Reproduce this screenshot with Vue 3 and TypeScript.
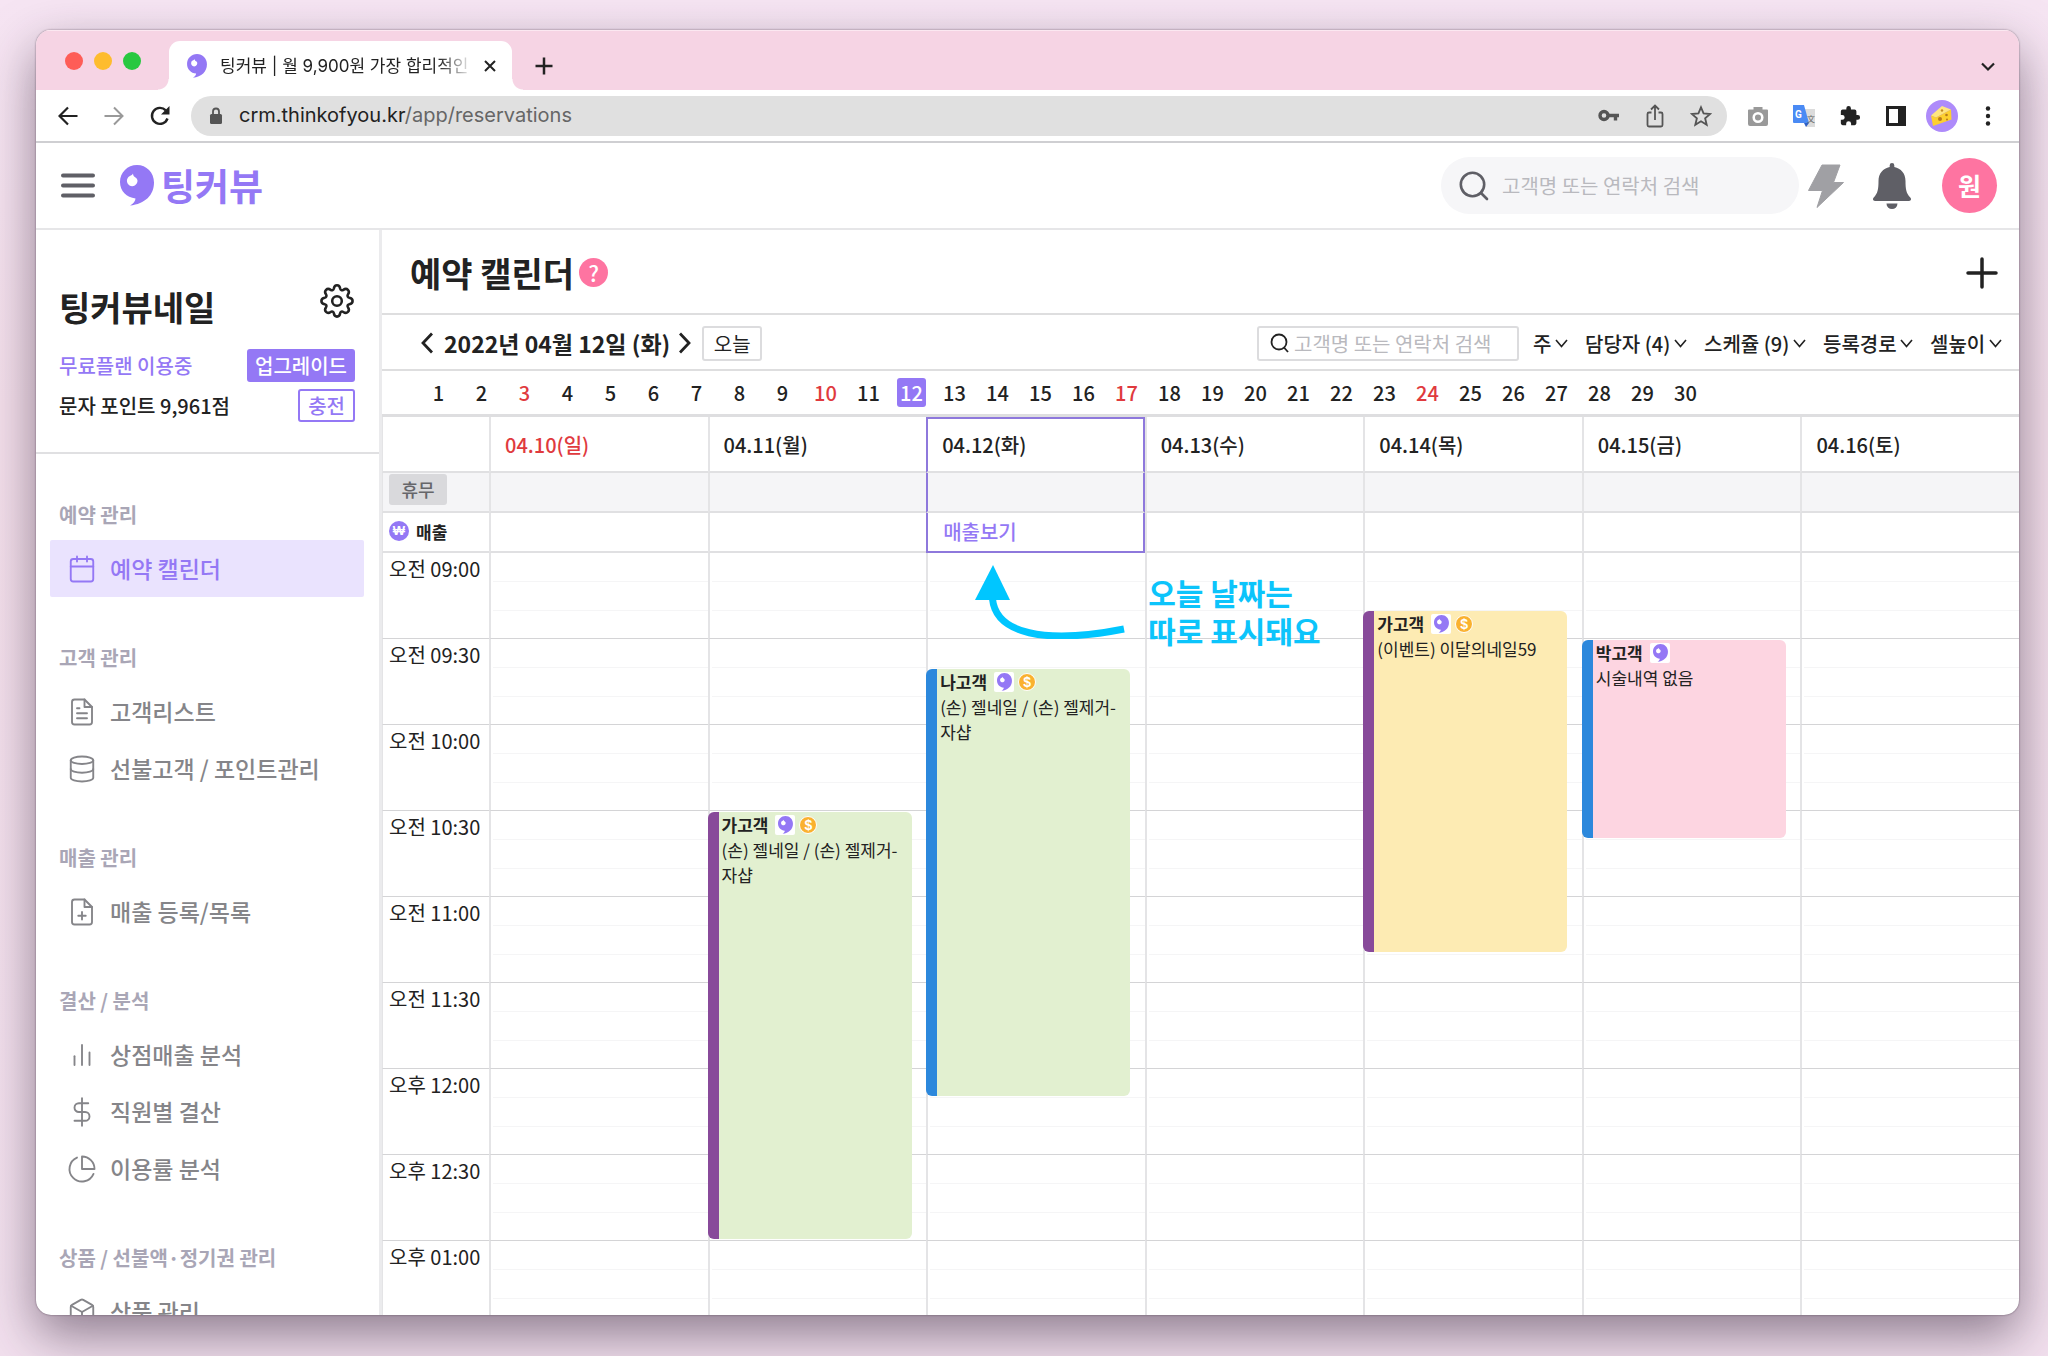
<script setup lang="ts">
interface NavItem {
  label: string
  icon: string[]
  active?: boolean
}

interface NavSection {
  title: string
  items: NavItem[]
}

interface Booking {
  day: number
  slot: number
  slots: number
  name: string
  detail: string
  paid: boolean
  color: 'green' | 'yellow' | 'pink'
  staff: 'purple' | 'blue'
}

const sections: NavSection[] = [
  {
    title: '예약 관리',
    items: [
      {
        label: '예약 캘린더',
        active: true,
        icon: ['M5 4h14a2 2 0 0 1 2 2v14a2 2 0 0 1-2 2H5a2 2 0 0 1-2-2V6a2 2 0 0 1 2-2z', 'M16 2v4', 'M8 2v4', 'M3 10h18'],
      },
    ],
  },
  {
    title: '고객 관리',
    items: [
      {
        label: '고객리스트',
        icon: ['M14 2H6a2 2 0 0 0-2 2v16a2 2 0 0 0 2 2h12a2 2 0 0 0 2-2V8z', 'M14 2v6h6', 'M16 13H8', 'M16 17H8', 'M10 9H8'],
      },
      {
        label: '선불고객 / 포인트관리',
        icon: ['M3 5a9 3 0 1 0 18 0a9 3 0 1 0-18 0', 'M21 12c0 1.66-4 3-9 3s-9-1.34-9-3', 'M3 5v14c0 1.66 4 3 9 3s9-1.34 9-3V5'],
      },
    ],
  },
  {
    title: '매출 관리',
    items: [
      {
        label: '매출 등록/목록',
        icon: ['M14 2H6a2 2 0 0 0-2 2v16a2 2 0 0 0 2 2h12a2 2 0 0 0 2-2V8z', 'M14 2v6h6', 'M12 18v-6', 'M9 15h6'],
      },
    ],
  },
  {
    title: '결산 / 분석',
    items: [
      { label: '상점매출 분석', icon: ['M18 20V10', 'M12 20V4', 'M6 20v-7'] },
      { label: '직원별 결산', icon: ['M12 1v22', 'M17 5H9.5a3.5 3.5 0 0 0 0 7h5a3.5 3.5 0 0 1 0 7H6'] },
      { label: '이용률 분석', icon: ['M21.21 15.89A10 10 0 1 1 8 2.83', 'M22 12A10 10 0 0 0 12 2v10z'] },
    ],
  },
  {
    title: '상품 / 선불액·정기권 관리',
    items: [
      {
        label: '상품 관리',
        icon: [
          'M21 16V8a2 2 0 0 0-1-1.73l-7-4a2 2 0 0 0-2 0l-7 4A2 2 0 0 0 3 8v8a2 2 0 0 0 1 1.73l7 4a2 2 0 0 0 2 0l7-4A2 2 0 0 0 21 16z',
          'M3.27 6.96L12 12.01l8.73-5.05',
          'M12 22.08V12',
        ],
      },
    ],
  },
]

const filters: string[] = ['주', '담당자 (4)', '스케쥴 (9)', '등록경로', '셀높이']
const monthDays: number[] = Array.from({ length: 30 }, (_, i) => i + 1)
const sundays: number[] = [3, 10, 17, 24]
const today = 12

const week: { day: number; label: string }[] = [
  { day: 10, label: '04.10(일)' },
  { day: 11, label: '04.11(월)' },
  { day: 12, label: '04.12(화)' },
  { day: 13, label: '04.13(수)' },
  { day: 14, label: '04.14(목)' },
  { day: 15, label: '04.15(금)' },
  { day: 16, label: '04.16(토)' },
]

const times: string[] = [
  '오전 09:00',
  '오전 09:30',
  '오전 10:00',
  '오전 10:30',
  '오전 11:00',
  '오전 11:30',
  '오후 12:00',
  '오후 12:30',
  '오후 01:00',
]

// slot = ten-minute steps counted from 09:00
const bookings: Booking[] = [
  { day: 11, slot: 9, slots: 15, name: '가고객', detail: '(손) 젤네일 / (손) 젤제거-자샵', paid: true, color: 'green', staff: 'purple' },
  { day: 12, slot: 4, slots: 15, name: '나고객', detail: '(손) 젤네일 / (손) 젤제거-자샵', paid: true, color: 'green', staff: 'blue' },
  { day: 14, slot: 2, slots: 12, name: '가고객', detail: '(이벤트) 이달의네일59', paid: true, color: 'yellow', staff: 'purple' },
  { day: 15, slot: 3, slots: 7, name: '박고객', detail: '시술내역 없음', paid: false, color: 'pink', staff: 'blue' },
]

const ROW_HEIGHT = 86
const SLOTS_PER_ROW = 3

function bookingsAt(day: number, row: number): Booking[] {
  return bookings.filter((b) => b.day === day && Math.floor(b.slot / SLOTS_PER_ROW) === row)
}

function bookingStyle(b: Booking): Record<string, string> {
  const slotHeight = ROW_HEIGHT / SLOTS_PER_ROW
  return {
    top: `${Math.round((b.slot % SLOTS_PER_ROW) * slotHeight) + 1}px`,
    height: `${Math.round(b.slots * slotHeight) - 3}px`,
  }
}

const bubble =
  'M17 0C26.500 0 34 7.500 34 17.500C34 30 25 39 10 40.500C13.500 38.500 15.500 36 15.500 33.500C6.500 32.500 0 26 0 17C0 7.500 7.500 0 17 0Z'
const bubbleSpot = 'M13 8.500c0 2 1 3 2.500 4c1.500 1 2 2.200 2 3.500a5.300 5.300 0 1 1-8-4.700c2-1 3-1.600 3.500-2.800z'
</script>

<template>
  <div class="desktop">
    <div class="window">
      <div class="tab-strip">
        <div class="lights"><i class="red"></i><i class="amber"></i><i class="green"></i></div>
        <div class="tab">
          <svg class="favicon" viewBox="0 0 34 41"><path :d="bubble" fill="#9478f5" /><path :d="bubbleSpot" fill="#fff" /></svg>
          <span class="tab-title">팅커뷰 | 월 9,900원 가장 합리적인</span>
          <button class="plain" aria-label="탭 닫기">
            <svg width="12" height="12" viewBox="0 0 12 12" fill="none" stroke="#222" stroke-width="2"><path d="M1 1l10 10M11 1L1 11" /></svg>
          </button>
        </div>
        <button class="plain new-tab" aria-label="새 탭">
          <svg width="18" height="18" viewBox="0 0 18 18" fill="none" stroke="#222" stroke-width="2.500"><path d="M9 0.500v17M0.500 9h17" /></svg>
        </button>
        <button class="plain tab-list" aria-label="탭 목록">
          <svg width="14" height="10" viewBox="0 0 14 10" fill="none" stroke="#222" stroke-width="2.200"><path d="M1 1.500l6 6 6-6" /></svg>
        </button>
      </div>

      <div class="browser-bar">
        <button class="plain nav-button" aria-label="뒤로">
          <svg width="20" height="20" viewBox="0 0 20 20" fill="none" stroke="#222" stroke-width="2.200"><path d="M19.500 10H2M10 1.500L1.500 10l8.500 8.500" /></svg>
        </button>
        <button class="plain nav-button" aria-label="앞으로">
          <svg width="20" height="20" viewBox="0 0 20 20" fill="none" stroke="#999" stroke-width="2"><path d="M0.500 10H18M10 1.500l8.500 8.500-8.500 8.500" /></svg>
        </button>
        <button class="plain nav-button" aria-label="새로고침">
          <svg width="22" height="22" viewBox="0 0 22 22"><path d="M18.500 13.500A8 8 0 1 1 16.800 5.400" fill="none" stroke="#222" stroke-width="2.400" /><path d="M20.500 1v8.500H12z" fill="#222" /></svg>
        </button>
        <div class="address">
          <svg width="14" height="18" viewBox="0 0 14 18"><rect x="1" y="7" width="12" height="10" rx="1.500" fill="#555" /><path d="M4 7V4.500a3 3 0 0 1 6 0V7" fill="none" stroke="#555" stroke-width="1.800" /></svg>
          <span class="url">crm.thinkofyou.kr<span class="url-path">/app/reservations</span></span>
          <svg width="22" height="22" viewBox="0 0 22 22" fill="none" stroke="#555"><circle cx="6" cy="10.500" r="4" stroke-width="3.400" /><path d="M10 10.500h11M17.500 10.500v5" stroke-width="3.400" /></svg>
          <svg width="22" height="26" viewBox="0 0 22 26" fill="none" stroke="#555" stroke-width="1.800"><path d="M7.500 9.500H5a1.500 1.500 0 0 0-1.500 1.500v11A1.500 1.500 0 0 0 5 23.500h12a1.500 1.500 0 0 0 1.500-1.500V11A1.500 1.500 0 0 0 17 9.500h-2.500M11 17V3M7 6.500l4-4 4 4" /></svg>
          <svg width="22" height="22" viewBox="0 0 24 24" fill="none" stroke="#555" stroke-width="2"><path d="M12 2.500l2.800 6.700 7.200.6-5.500 4.700 1.700 7-6.200-3.800-6.200 3.800 1.700-7L2 9.800l7.200-.6z" /></svg>
        </div>
        <div class="extensions">
          <svg width="22" height="22" viewBox="0 0 22 22"><path d="M2 4.500h4.500V2h9v2.500H20A1 1 0 0 1 21 5.500V19a2 2 0 0 1-2 2H3a2 2 0 0 1-2-2V5.500a1 1 0 0 1 1-1z" fill="#999" /><circle cx="11" cy="12.500" r="4.300" fill="#999" stroke="#fff" stroke-width="2.500" /></svg>
          <svg width="24" height="24" viewBox="0 0 24 24"><path d="M11 5h12v18H14z" fill="#dcdcdc" /><path d="M1 1h11l5 18H2a1 1 0 0 1-1-1z" fill="#4a8af4" /><path d="M12 19h5l-3 4z" fill="#2f5fc4" /><text x="3" y="14" font-size="10" font-weight="700" fill="#fff" font-family="Roboto, sans-serif">G</text><text x="15" y="18" font-size="8" fill="#666" font-family="'Noto Sans CJK KR', sans-serif">文</text></svg>
          <svg width="22" height="22" viewBox="0 0 24 24"><path d="M20.500 11H19V7a2 2 0 0 0-2-2h-4V3.500a2.500 2.500 0 0 0-5 0V5H4a2 2 0 0 0-2 2v3.800h1.500a2.700 2.700 0 0 1 0 5.400H2V20a2 2 0 0 0 2 2h3.800v-1.500a2.700 2.700 0 0 1 5.400 0V22H17a2 2 0 0 0 2-2v-4h1.500a2.500 2.500 0 0 0 0-5z" fill="#222" /></svg>
          <svg width="22" height="22" viewBox="0 0 22 22"><path d="M1 1h20v20H1z" fill="#222" /><path d="M4 4h9v14H4z" fill="#fff" /></svg>
          <svg width="32" height="32" viewBox="0 0 32 32"><circle cx="16" cy="16" r="16" fill="#ae8bfa" /><path d="M5 15.500L16 6l9 3.500-15 8z" fill="#ffe680" /><path d="M5 15.500l5 2 15-8 .5 10L7 26z" fill="#fdd02f" /><circle cx="14" cy="19" r="2" fill="#b87a1c" /><circle cx="20.500" cy="15" r="1.300" fill="#b87a1c" /><circle cx="21" cy="19.500" r="1" fill="#b87a1c" /><circle cx="16" cy="10.500" r="1.200" fill="#c48a25" /></svg>
          <svg width="22" height="22" viewBox="0 0 22 22" fill="#222"><circle cx="11" cy="3.500" r="2.200" /><circle cx="11" cy="11" r="2.200" /><circle cx="11" cy="18.500" r="2.200" /></svg>
        </div>
      </div>

      <header class="app-header">
        <button class="plain" aria-label="메뉴">
          <svg width="34" height="25" viewBox="0 0 34 25" fill="none" stroke="#5f5f66" stroke-width="4" stroke-linecap="round"><path d="M2 2.500h30M2 12.500h30M2 22.500h30" /></svg>
        </button>
        <a class="brand" href="#">
          <svg width="34" height="41" viewBox="0 0 34 41"><path :d="bubble" fill="#9478f5" /><path :d="bubbleSpot" fill="#fff" /></svg>
          <span>팅커뷰</span>
        </a>
        <label class="global-search">
          <svg width="30" height="30" viewBox="0 0 30 30" fill="none" stroke="#5f5f66" stroke-width="2.600" stroke-linecap="round"><circle cx="13.500" cy="13.500" r="11.700" /><path d="M22 22l6 6" /></svg>
          <input type="text" placeholder="고객명 또는 연락처 검색" aria-label="고객명 또는 연락처 검색" />
        </label>
        <button class="plain bolt" aria-label="빠른 실행">
          <svg width="36" height="44" viewBox="0 0 36 44"><path d="M14 1h18L25.500 18.500H35.500L9 43.500 14.500 26.500H0.500z" fill="#a0a0a4" stroke="#a0a0a4" stroke-linejoin="round" /></svg>
        </button>
        <button class="plain bell" aria-label="알림">
          <svg width="38" height="46" viewBox="0 0 38 46" fill="#5f5f66"><path d="M19 0a2.300 2.300 0 0 1 2.300 2.300V4C28 5.200 32.500 10.500 32.500 18c0 8 .8 12.500 4.800 16.500 1.400 1.500.7 3.500-1.300 3.500H2c-2 0-2.700-2-1.300-3.500C4.700 30.500 5.500 26 5.500 18 5.500 10.500 10 5.200 16.700 4V2.300A2.300 2.300 0 0 1 19 0z" /><path d="M13.500 40.500h11a5.500 5.500 0 0 1-11 0z" /></svg>
        </button>
        <button class="profile">원</button>
      </header>

      <div class="body">
        <aside class="sidebar">
          <section class="shop">
            <div class="shop-head">
              <h2>팅커뷰네일</h2>
              <button class="plain" aria-label="설정">
                <svg width="36" height="36" viewBox="0 0 24 24" fill="none" stroke="#222" stroke-width="1.700" stroke-linejoin="round"><circle cx="12" cy="12" r="3.200" /><path d="M12 1.500c1.400 0 1.900.9 2.100 2.200.2 1.100 1.200 1.500 2.100.9 1.100-.8 2.100-1 3.100 0s.8 2 0 3.100c-.6.900-.2 1.900.9 2.100 1.300.2 2.200.7 2.200 2.200s-.9 1.900-2.200 2.100c-1.100.2-1.500 1.200-.9 2.100.8 1.100 1 2.100 0 3.100s-2 .8-3.100 0c-.9-.6-1.900-.2-2.100.9-.2 1.300-.7 2.200-2.100 2.200s-1.900-.9-2.100-2.200c-.2-1.100-1.200-1.500-2.100-.9-1.100.8-2.100 1-3.100 0s-.8-2 0-3.100c.6-.9.2-1.900-.9-2.100-1.300-.2-2.200-.7-2.200-2.100s.9-2 2.200-2.200c1.100-.2 1.500-1.200.9-2.100-.8-1.100-1-2.100 0-3.100s2-.8 3.100 0c.9.600 1.900.2 2.100-.9.200-1.300.7-2.200 2.100-2.200z" /></svg>
              </button>
            </div>
            <div class="shop-row">
              <span class="plan">무료플랜 이용중</span>
              <button class="tag solid">업그레이드</button>
            </div>
            <div class="shop-row">
              <span>문자 포인트 9,961점</span>
              <button class="tag outline">충전</button>
            </div>
          </section>
          <nav>
            <section v-for="section in sections" :key="section.title" class="nav-section">
              <h3>{{ section.title }}</h3>
              <a v-for="item in section.items" :key="item.label" href="#" :class="['nav-item', { active: item.active }]">
                <svg width="30" height="30" viewBox="0 0 24 24" fill="none" stroke="currentColor" stroke-width="1.500" stroke-linecap="round" stroke-linejoin="round">
                  <path v-for="d in item.icon" :key="d" :d="d" />
                </svg>
                <span>{{ item.label }}</span>
              </a>
            </section>
          </nav>
        </aside>

        <main class="main">
          <div class="page-head">
            <h1>예약 캘린더</h1>
            <button class="help" aria-label="도움말">?</button>
            <button class="plain add" aria-label="예약 추가">
              <svg width="32" height="32" viewBox="0 0 32 32" fill="none" stroke="#222" stroke-width="3.500" stroke-linecap="round"><path d="M16 2v28M2 16h28" /></svg>
            </button>
          </div>

          <div class="toolbar">
            <button class="plain" aria-label="이전">
              <svg width="12" height="22" viewBox="0 0 12 22" fill="none" stroke="#222" stroke-width="2.800"><path d="M11 1.500L2 11l9 9.500" /></svg>
            </button>
            <strong class="date">2022년 04월 12일 (화)</strong>
            <button class="plain" aria-label="다음">
              <svg width="12" height="22" viewBox="0 0 12 22" fill="none" stroke="#222" stroke-width="2.800"><path d="M1 1.500L10 11l-9 9.500" /></svg>
            </button>
            <button class="today-button">오늘</button>
            <label class="search">
              <svg width="20" height="20" viewBox="0 0 20 20" fill="none" stroke="#222" stroke-width="1.800"><circle cx="9" cy="9" r="7.500" /><path d="M14 14.500l4 4.500" /></svg>
              <input type="text" placeholder="고객명 또는 연락처 검색" aria-label="예약 고객 검색" />
            </label>
            <label v-for="filter in filters" :key="filter" class="filter">
              <select :aria-label="filter"><option>{{ filter }}</option></select>
              <svg width="13" height="9" viewBox="0 0 13 9" fill="none" stroke="#222" stroke-width="1.600"><path d="M1 1l5.500 6.500L12 1" /></svg>
            </label>
          </div>

          <div class="month">
            <button v-for="d in monthDays" :key="d" class="month-day">
              <span :class="{ sunday: sundays.includes(d), current: d === today }">{{ d }}</span>
            </button>
          </div>

          <table class="calendar">
            <thead>
              <tr class="dates">
                <th class="axis"></th>
                <th v-for="d in week" :key="d.day" scope="col" :class="{ sunday: d.day === 10, today: d.day === today }">{{ d.label }}</th>
              </tr>
              <tr class="closed">
                <th class="axis" scope="row"><span class="chip">휴무</span></th>
                <td v-for="d in week" :key="d.day" :class="{ today: d.day === today }"></td>
              </tr>
              <tr class="sales">
                <th class="axis" scope="row"><span class="sales-label"><i>₩</i>매출</span></th>
                <td v-for="d in week" :key="d.day" :class="{ today: d.day === today }">
                  <a v-if="d.day === today" href="#">매출보기</a>
                </td>
              </tr>
            </thead>
            <tbody>
              <tr v-for="(time, row) in times" :key="time">
                <th class="axis" scope="row">{{ time }}</th>
                <td v-for="d in week" :key="d.day">
                  <article v-for="b in bookingsAt(d.day, row)" :key="b.slot" :class="['booking', b.color, b.staff]" :style="bookingStyle(b)">
                    <div class="booking-head">
                      <strong>{{ b.name }}</strong>
                      <svg class="member" width="20" height="20" viewBox="0 0 20 20"><rect width="20" height="20" rx="2" fill="#fff" /><g transform="translate(3 1) scale(.44)"><path :d="bubble" fill="#9478f5" /><path :d="bubbleSpot" fill="#fff" /></g></svg>
                      <i v-if="b.paid" class="coin">$</i>
                    </div>
                    <p>{{ b.detail }}</p>
                  </article>
                  <div v-if="d.day === today && row === 0" class="callout">
                    <svg width="150" height="74" viewBox="0 0 150 74"><path d="M17.500 34C21 68 68 80 149 64" fill="none" stroke="#00c6ff" stroke-width="7" /><path d="M18 0l17 35H0z" fill="#00c6ff" /></svg>
                    <p>오늘 날짜는<br />따로 표시돼요</p>
                  </div>
                </td>
              </tr>
            </tbody>
          </table>
        </main>
      </div>
    </div>
  </div>
</template>

<style>
body {
  margin: 0;
}
</style>

<style scoped>
* {
  box-sizing: border-box;
}

.desktop {
  display: flex;
  height: 100vh;
  padding: 30px 29px 41px 36px;
  overflow: hidden;
  background: linear-gradient(180deg, #f6e5f3 0%, #f4dfeb 30%, #f2e0ee 100%);
  color: #222;
  font-family: 'Noto Sans CJK KR', 'Noto Sans', sans-serif;
  font-size: 20px;
  line-height: 29px;
}

.window {
  display: flex;
  flex: 1;
  flex-direction: column;
  min-width: 0;
  overflow: hidden;
  border-radius: 15px;
  background: #fff;
  box-shadow: 0 0 2px rgba(40, 20, 40, 0.6), 0 20px 50px rgba(50, 35, 55, 0.52);
}

button,
input,
select {
  margin: 0;
  padding: 0;
  border: 0;
  background: none;
  color: inherit;
  font: inherit;
}

svg {
  display: block;
  flex: none;
}

a {
  color: inherit;
  text-decoration: none;
}

h1,
h2,
h3,
p {
  margin: 0;
}

i {
  font-style: normal;
}

.plain {
  display: flex;
  align-items: center;
  justify-content: center;
}

/* browser chrome */
.tab-strip {
  display: flex;
  flex: none;
  align-items: flex-end;
  height: 60px;
  padding: 0 24px 0 29px;
  background: #f6d4e4;
  box-shadow: inset 0 1px #fbe8f1;
}

.lights {
  display: flex;
  gap: 11px;
  width: 104px;
  padding-bottom: 20px;
}

.lights i {
  width: 18px;
  height: 18px;
  border-radius: 50%;
}

.red {
  background: #fe5d57;
}

.amber {
  background: #febc2e;
}

.lights .green {
  background: #28c840;
}

.tab {
  position: relative;
  display: flex;
  align-items: center;
  width: 343px;
  height: 49px;
  padding: 0 16px 0 18px;
  border-radius: 11px 11px 0 0;
  background: #fff;
}

.tab::before,
.tab::after {
  content: '';
  position: absolute;
  bottom: 0;
  width: 11px;
  height: 11px;
}

.tab::before {
  right: 100%;
  background: radial-gradient(circle at 0 0, transparent 10px, #fff 11px);
}

.tab::after {
  left: 100%;
  background: radial-gradient(circle at 100% 0, transparent 10px, #fff 11px);
}

.favicon {
  width: 20px;
  height: 24px;
}

.tab-title {
  flex: 1;
  margin: 0 16px 0 13px;
  overflow: hidden;
  font-family: Inter, 'Noto Sans CJK KR', sans-serif;
  font-size: 17px;
  line-height: 28px;
  white-space: nowrap;
  mask-image: linear-gradient(90deg, #000 88%, transparent 102%);
}

.new-tab {
  margin: 0 auto 15px 23px;
}

.tab-list {
  margin-bottom: 18px;
}

.browser-bar {
  display: flex;
  flex: none;
  align-items: center;
  height: 53px;
  padding-left: 20px;
  border-bottom: 2px solid #cfcfd2;
}

.nav-button {
  width: 24px;
  height: 24px;
  margin-right: 22px;
}

.address {
  display: flex;
  flex: 1;
  align-items: center;
  gap: 24px;
  height: 40px;
  margin-left: -3px;
  padding: 0 15px 0 18px;
  border-radius: 20px;
  background: #e0e0e0;
}

.url {
  flex: 1;
  margin-left: -8px;
  color: #222;
  font-family: Inter, 'Noto Sans', sans-serif;
  font-size: 20px;
}

.url-path {
  color: #666;
}

.extensions {
  display: grid;
  grid-template-columns: repeat(6, 46px);
  place-items: center;
  padding: 0 8px;
}

/* application header */
.app-header {
  display: flex;
  flex: none;
  align-items: center;
  height: 87px;
  padding: 0 22px 0 25px;
  border-bottom: 2px solid #e6e6e8;
}

.brand {
  display: flex;
  align-items: center;
  gap: 7px;
  margin-right: auto;
  margin-left: 25px;
  color: #9478f5;
  font-size: 37px;
  font-weight: 700;
}

.global-search {
  display: flex;
  align-items: center;
  gap: 13px;
  width: 358px;
  height: 57px;
  padding: 0 18px;
  border-radius: 29px;
  background: #f6f6f8;
}

input {
  flex: 1;
  min-width: 0;
  outline: none;
  font-size: 20px;
}

input::placeholder {
  color: #b9b9be;
  opacity: 1;
}

.bolt {
  margin-left: 9px;
}

.bell {
  margin-left: 29px;
}

.profile {
  width: 55px;
  height: 55px;
  margin-left: 31px;
  border-radius: 50%;
  background: #fe74a1;
  color: #fff;
  font-size: 25px;
  font-weight: 700;
}

.body {
  display: flex;
  flex: 1;
  min-height: 0;
}

/* sidebar */
.sidebar {
  flex: none;
  width: 346px;
  overflow: hidden;
  border-right: 3px solid #ebebed;
}

.shop {
  padding: 53px 24px 30px 23px;
  border-bottom: 2px solid #e0e0e2;
}

.shop-head {
  display: flex;
  align-items: flex-start;
  justify-content: space-between;
  margin-bottom: 18px;
}

h2 {
  font-size: 34px;
  font-weight: 700;
  line-height: 48px;
}

.shop-row {
  display: flex;
  align-items: center;
  justify-content: space-between;
  font-weight: 500;
}

.shop-row + .shop-row {
  margin-top: 7px;
}

.plan {
  color: #9478f5;
}

.tag {
  height: 33px;
  padding: 0 8px;
  border: 2px solid #9478f5;
  border-radius: 3px;
  line-height: 29px;
}

.solid {
  padding: 0 6px;
  background: #9478f5;
  color: #fff;
}

.outline {
  color: #9478f5;
}

.nav-section {
  padding-top: 46px;
}

h3 {
  margin: 0 23px 11px;
  color: #a9a6b6;
  font-size: 20px;
  font-weight: 700;
  line-height: 29px;
  white-space: nowrap;
}

.nav-item {
  display: flex;
  align-items: center;
  gap: 13px;
  height: 57px;
  margin: 0 15px 0 14px;
  padding-left: 17px;
  color: #858589;
  font-size: 23px;
  font-weight: 500;
  white-space: nowrap;
}

.nav-item.active {
  border-radius: 2px;
  background: #eae3fe;
  color: #9478f5;
}

/* main column */
.main {
  flex: 1;
  min-width: 0;
  overflow: hidden;
}

.page-head {
  display: flex;
  align-items: center;
  height: 85px;
  padding: 2px 21px 0 28px;
  border-bottom: 2px solid #dededf;
}

h1 {
  font-size: 34px;
  font-weight: 700;
  line-height: 48px;
}

.help {
  width: 29px;
  height: 29px;
  margin-left: 5px;
  border-radius: 50%;
  background: #fe74a1;
  color: #fff;
  font-size: 22px;
  font-weight: 500;
  line-height: 29px;
}

.add {
  margin-left: auto;
}

.toolbar {
  display: flex;
  align-items: center;
  height: 56px;
  padding: 2px 17px 0 39px;
  border-bottom: 2px solid #dededf;
}

.date {
  margin: 0 9px 0 11px;
  font-size: 23px;
  white-space: nowrap;
}

.today-button,
.search {
  height: 35px;
  border: 2px solid #dcdcde;
  border-radius: 3px;
}

.today-button {
  width: 60px;
  margin-left: 11px;
  line-height: 29px;
}

.search {
  display: flex;
  align-items: center;
  gap: 4px;
  width: 262px;
  margin-right: -3px;
  margin-left: auto;
  padding-left: 11px;
}

.filter {
  display: flex;
  align-items: center;
  gap: 3px;
  margin-left: 17px;
}

select {
  appearance: none;
  outline: none;
  font-weight: 500;
}

.month {
  display: flex;
  height: 46px;
  padding-left: 35px;
  border-bottom: 3px solid #dedee0;
}

.month-day {
  display: flex;
  flex: none;
  align-items: center;
  justify-content: center;
  width: 43px;
  font-weight: 500;
}

.month-day span {
  min-width: 29px;
  border-radius: 3px;
  line-height: 29px;
}

.sunday {
  color: #e03a3e;
}

.month-day .current {
  background: #9478f5;
  color: #fff;
}

/* week table */
.calendar {
  width: 100%;
  border-spacing: 0;
  table-layout: fixed;
}

.calendar th,
.calendar td {
  position: relative;
  padding: 0;
  border-bottom: 2px solid #e0e0e2;
  border-left: 2px solid #e4e4e6;
  font-weight: 500;
  text-align: left;
}

.calendar .axis {
  width: 107px;
  padding-left: 6px;
  border-left-width: 1px;
}

.calendar .dates th {
  height: 56px;
  padding-left: 14px;
}

.closed td,
.closed th {
  height: 40px;
  background: #f5f5f7;
}

.sales td,
.sales th {
  height: 40px;
}

.calendar .sales td {
  padding: 0 0 2px 15px;
}

.calendar .sales th {
  padding-bottom: 2px;
}

.calendar thead .today {
  border-right: 2px solid #8e78dc;
  border-left-color: #8e78dc;
}

.dates .today {
  box-shadow: inset 0 2px #8e78dc;
}

.calendar .sales .today {
  border-bottom-color: #8e78dc;
}

.sales a {
  color: #9478f5;
}

.chip {
  display: block;
  width: 58px;
  height: 31px;
  margin-bottom: 6px;
  border-radius: 3px;
  background: #d9d9dc;
  color: #66666a;
  font-size: 18px;
  line-height: 31px;
  text-align: center;
}

.sales-label {
  display: flex;
  align-items: center;
  gap: 7px;
  font-size: 17px;
  font-weight: 700;
}

.sales-label i {
  width: 20px;
  height: 20px;
  border-radius: 50%;
  background: #9478f5;
  color: #fff;
  font-family: 'Liberation Sans', sans-serif;
  font-size: 13px;
  line-height: 20px;
  text-align: center;
}

.calendar tbody th {
  height: 86px;
  padding-top: 1px;
  border-bottom-width: 1px;
  border-bottom-color: #d4d4d6;
  font-weight: 400;
  vertical-align: top;
}

.calendar tbody td {
  border-bottom-width: 1px;
  border-bottom-color: #d4d4d6;
  background: linear-gradient(#f5f5f6, #f5f5f6) 2px 28px / 100% 1px no-repeat, linear-gradient(#f5f5f6, #f5f5f6) 2px 57px / 100% 1px no-repeat;
  vertical-align: top;
}

.booking {
  position: absolute;
  left: -2px;
  z-index: 1;
  width: 204px;
  padding: 0 8px 0 3px;
  border-left: 11px solid;
  border-radius: 6px;
  color: #222;
  font-size: 17px;
  font-weight: 400;
  line-height: 25px;
}

.booking.green {
  background: #e2f0d0;
}

.booking.yellow {
  background: #fdebb3;
}

.booking.pink {
  background: #fdd5e1;
}

.booking.purple {
  border-color: #884a9a;
}

.booking.blue {
  border-color: #2c88dc;
}

.booking-head {
  display: flex;
  align-items: center;
  height: 25px;
}

.member {
  margin: 0 4px 0 7px;
}

.coin {
  width: 18px;
  height: 18px;
  border: 1px solid #fff;
  border-radius: 50%;
  background: #fab12f;
  color: #fff;
  font-family: 'Liberation Sans', sans-serif;
  font-size: 14px;
  font-weight: 700;
  line-height: 16px;
  text-align: center;
}

.callout {
  position: absolute;
  top: 12px;
  left: 47px;
  z-index: 2;
  display: flex;
  gap: 23px;
  color: #0cc4fb;
  font-size: 30px;
  font-weight: 700;
  line-height: 38px;
  white-space: nowrap;
}

.callout p {
  padding-top: 8px;
}
</style>
